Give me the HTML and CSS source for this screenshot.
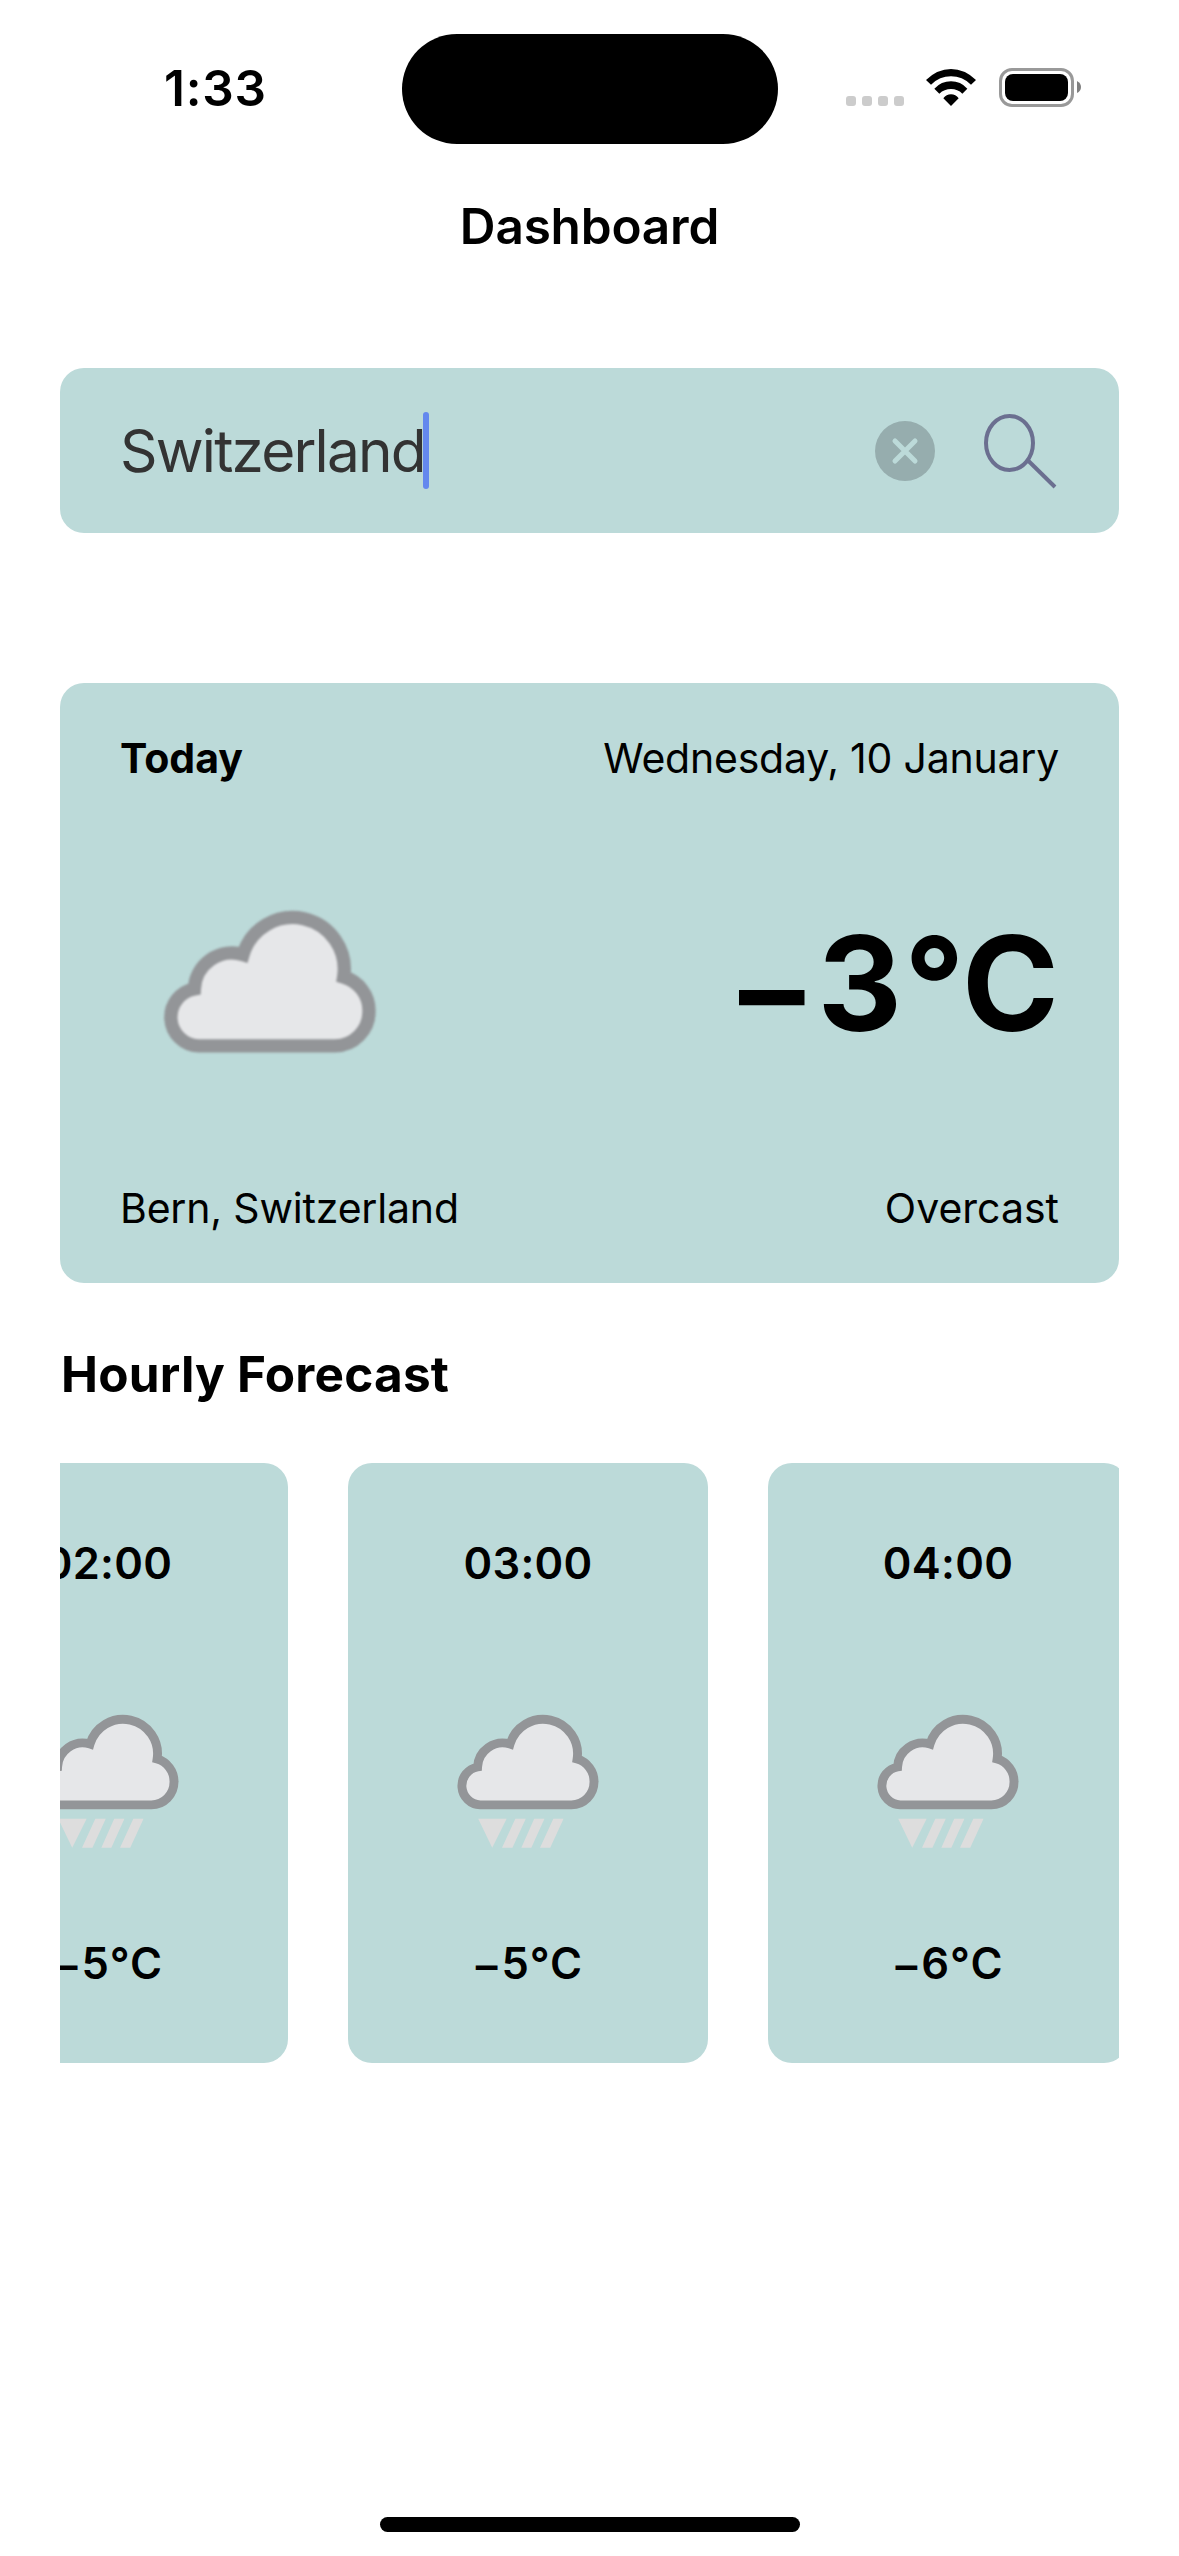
FILE: index.html
```html
<!DOCTYPE html>
<html lang="en">
<head>
<meta charset="utf-8">
<title>Dashboard</title>
<link rel="stylesheet" href="styles.css">
</head>
<body>
<svg class="defs" aria-hidden="true">
  <symbol id="cloud" viewBox="240 489 900 900">
    <path d="M475 1127.500A86 86 0 0 1 463 957A113 113 0 0 1 609 854A155 155 0 0 1 911 921A105 105 0 0 1 987 1024A103 103 0 0 1 885 1127.500Z" fill="#e6e7e9" stroke="#939598" stroke-width="40"/>
  </symbol>
  <symbol id="rain" viewBox="240 489 900 900">
    <use href="#cloud" x="240" y="489" width="900" height="900"/>
    <path d="M466 1190H594L529 1320ZM633 1190H680L620 1320H573ZM718 1190H764L705 1320H660ZM804 1190H850L790 1320H744Z" fill="#ddd"/>
  </symbol>
</svg>
<div class="screen">
  <header class="status">
    <div class="side"><span class="clock">1:33</span></div>
    <div class="island"></div>
    <div class="side indicators">
      <div class="dots"><i></i><i></i><i></i><i></i></div>
      <svg class="wifi" viewBox="440 147 150 111"><path d="M440 180Q474 147 515 147T590 180L575 194Q549 169 515 169T455 194ZM465 206Q486 184 515 184T564 206L549 221Q535 207 515 207T480 221ZM492 235Q501 223 515 223T538 235L515 258Z"/></svg>
      <div class="battery"><div class="level"></div></div>
      <svg class="nub" viewBox="0 0 4 12"><path d="M0 0Q4 2 4 6T0 12Z" fill="#808080"/></svg>
    </div>
  </header>
  <h1 class="title">Dashboard</h1>
  <main>
    <div class="search">
      <span class="query">Switzerland</span><span class="caret"></span>
      <svg class="clear" viewBox="0 0 60 60"><circle cx="30" cy="30" r="30" fill="#96adae"/><path d="M20 20L40 40M40 20L20 40" stroke="#bcdad9" stroke-width="5" stroke-linecap="round"/></svg>
      <svg class="lens" viewBox="0 0 74 78"><ellipse cx="25.500" cy="31" rx="23.500" ry="27"/><path d="M43.500 48L71 75"/></svg>
    </div>
    <section class="today">
      <div class="line"><b class="label">Today</b><span class="date">Wednesday, 10 January</span></div>
      <div class="line middle"><svg class="now-icon"><use href="#cloud"/></svg><span class="temp"><span class="minus">–</span><span class="digit">3</span>°C</span></div>
      <div class="line"><span class="place">Bern, Switzerland</span><span class="sky">Overcast</span></div>
    </section>
    <h2 class="heading">Hourly Forecast</h2>
    <section class="hours">
      <article class="hour"><span class="time">02:00</span><svg class="hour-icon"><use href="#rain"/></svg><span class="deg"><span class="minus">–</span>5°C</span></article>
      <article class="hour"><span class="time">03:00</span><svg class="hour-icon"><use href="#rain"/></svg><span class="deg"><span class="minus">–</span>5°C</span></article>
      <article class="hour"><span class="time">04:00</span><svg class="hour-icon"><use href="#rain"/></svg><span class="deg"><span class="minus">–</span>6°C</span></article>
    </section>
  </main>
  <div class="home"></div>
</div>
</body>
</html>
```
FILE: styles.css
```css
* { box-sizing: border-box; }
body { margin: 0; background: #fff; color: #000; font-family: Inter, "Liberation Sans", sans-serif; }
svg { display: block; flex: none; }
.defs { position: absolute; width: 0; height: 0; }
.screen { width: 1179px; height: 2556px; overflow: hidden; display: flex; flex-direction: column; }
.status { height: 177px; padding-top: 34px; display: flex; align-items: flex-start; justify-content: space-between; }
.side { width: 401px; height: 110px; display: flex; }
.clock { margin: 24px 0 0 164px; line-height: 60px; font-size: 49.5px; font-weight: 600; letter-spacing: 0.8px; }
.island { width: 376px; height: 110px; border-radius: 55px; background: #000; }
.indicators { padding: 34px 0 0 68px; }
.dots { display: flex; gap: 6px; margin-top: 28px; }
.dots i { width: 10px; height: 10px; border-radius: 3px; background: #ccc; }
.wifi { width: 50px; height: 37px; margin: 1px 0 0 22px; }
.battery { width: 75px; height: 39px; margin-left: 23px; border: 3px solid #999; border-radius: 13px; padding: 3px; }
.level { height: 27px; border-radius: 8px; background: #000; }
.nub { width: 4px; height: 12px; margin: 13px 0 0 3px; }
.title { margin: 19px 0 1px; height: 60px; line-height: 60px; text-align: center; font-size: 49.5px; font-weight: 600; letter-spacing: -0.2px; }
main { padding: 111px 60px 0; }
.search { height: 165px; border-radius: 24px; background: #bcdad9; display: flex; align-items: center; padding: 0 61px 0 60px; }
.query { font-size: 58.5px; color: #333; letter-spacing: -1.8px; white-space: nowrap; width: 303px; }
.caret { width: 6px; height: 77px; border-radius: 3px; background: #6488ee; }
.clear { width: 60px; height: 60px; margin-left: auto; }
.lens { width: 74px; height: 78px; margin-left: 49px; fill: none; stroke: #6b6f90; stroke-width: 4; filter: blur(0.6px); }
.today { height: 600px; margin-top: 150px; padding: 45px 60px; border-radius: 24px; background: #bcdad9; display: flex; flex-direction: column; justify-content: space-between; }
.line { height: 60px; line-height: 60px; display: flex; align-items: center; justify-content: space-between; font-size: 41px; }
.date { letter-spacing: -0.22px; }
.place { letter-spacing: -0.18px; }
.middle { height: 300px; }
.now-icon { width: 300px; height: 300px; filter: blur(0.9px); }
.temp { font-size: 131px; font-weight: 700; padding-top: 2px; }
.minus { position: relative; top: 0.045em; line-height: 0; }
.temp .minus { letter-spacing: 13px; }
.digit { letter-spacing: 2px; }
.heading { margin: 61px 0 0 1px; height: 60px; line-height: 60px; font-size: 49.5px; font-weight: 700; letter-spacing: 0.2px; }
.hours { margin-top: 59px; height: 600px; display: flex; gap: 60px; overflow: hidden; }
.hour { flex: none; width: 360px; height: 600px; border-radius: 24px; background: #bcdad9; display: flex; flex-direction: column; align-items: center; justify-content: space-between; padding: 70px 0; line-height: 60px; font-size: 43.5px; font-weight: 600; }
.hour:first-child { margin-left: -132px; }
.time { letter-spacing: 0.3px; }
.deg { letter-spacing: 1px; padding-left: 3px; }
.deg .minus { letter-spacing: 4px; }
.hour-icon { width: 200px; height: 200px; filter: blur(0.7px); }
.home { width: 420px; height: 15px; border-radius: 8px; background: #000; margin: auto auto 24px; }
```
